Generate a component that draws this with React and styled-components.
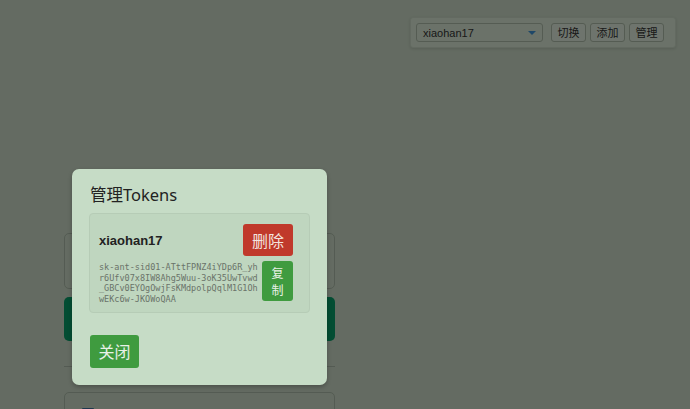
import React from 'react'
import styled, { createGlobalStyle } from 'styled-components'

const GlobalStyle = createGlobalStyle`
  html, body {
    margin: 0;
    padding: 0;
    background: #c8d7c4;
    font-family: "Liberation Sans", "Noto Sans CJK SC", sans-serif;
  }
`

const Page = styled.div`
  position: relative;
  width: 690px;
  height: 409px;
  overflow: hidden;
`

const TopBar = styled.div`
  display: flex;
  justify-content: flex-end;
  padding: 17px 14px 0 0;
`

const AccountPanel = styled.div`
  display: flex;
  align-items: center;
  gap: 4px;
  height: 31px;
  padding: 0 11px 0 5px;
  background: #d6e5d2;
  border: 1px solid #c6d4c2;
  border-radius: 3px;
  box-shadow: 0 1px 3px rgba(0, 0, 0, 0.12);
  box-sizing: border-box;
`

const Select = styled.div`
  display: flex;
  align-items: center;
  justify-content: space-between;
  width: 127px;
  height: 19px;
  padding: 0 6px;
  margin-right: 4px;
  box-sizing: border-box;
  border: 1px solid #aab8a6;
  border-radius: 3px;
  font-size: 11px;
  color: #333;
`

const Caret = styled.span`
  width: 0;
  height: 0;
  border-left: 4px solid transparent;
  border-right: 4px solid transparent;
  border-top: 4px solid #3d8fd0;
`

const SmallButton = styled.button`
  width: 35px;
  height: 19px;
  padding: 0;
  font-family: "Noto Sans CJK SC", sans-serif;
  font-size: 11px;
  line-height: 17px;
  color: #333;
  background: #dde9da;
  border: 1px solid #aab8a6;
  border-radius: 3px;
`

const Column = styled.div`
  display: flex;
  flex-direction: column;
  width: 271px;
  margin: 185px 0 0 64px;
`

const OutlineBox = styled.div`
  height: ${p => p.$h}px;
  border: 1px solid #a9b7a6;
  border-radius: 5px;
  box-sizing: border-box;
  margin-bottom: ${p => p.$mb}px;
  padding: 11px 17px;
`

const BigGreen = styled.div`
  height: 44px;
  background: #069a66;
  border-radius: 5px;
  margin-bottom: 25px;
`

const Rule = styled.div`
  height: 1px;
  background: #a9b7a6;
  margin-bottom: 25px;
`

const Overlay = styled.div`
  position: absolute;
  inset: 0;
  background: rgba(0, 0, 0, 0.5);
`

const Modal = styled.div`
  position: absolute;
  left: 72px;
  top: 169px;
  width: 255px;
  box-sizing: border-box;
  padding: 14px 17px 17px;
  background: #c6dcc6;
  border-radius: 7px;
  box-shadow: 0 2px 4px rgba(0, 0, 0, 0.25);
`

const Title = styled.h2`
  margin: 0 0 6px 1px;
  font-family: "Noto Sans", "Noto Sans CJK SC", sans-serif;
  font-weight: 400;
  font-size: 16.5px;
  line-height: 24px;
  color: #222;
`

const TokenCard = styled.div`
  display: flex;
  flex-direction: column;
  gap: 5px;
  padding: 10px 16px 8px 9px;
  background: #bfd6bf;
  border: 1px solid #b6ccb6;
  border-radius: 4px;
`

const CardRow = styled.div`
  display: flex;
  align-items: ${p => p.$align || 'center'};
  justify-content: space-between;
  gap: 4px;
`

const Name = styled.div`
  font-weight: 700;
  font-size: 13px;
  color: #222;
`

const ActionButton = styled.button`
  font-family: "Noto Sans CJK SC", sans-serif;
  color: ${p => p.$fg || '#e9f1e7'};
  background: ${p => p.$bg};
  border: none;
  border-radius: 3px;
  padding: 0;
  flex-shrink: 0;
  width: ${p => p.$w}px;
  height: ${p => p.$h}px;
  font-size: ${p => p.$fs}px;
  line-height: ${p => p.$lh || p.$h}px;
`

const TokenText = styled.div`
  flex: 1;
  min-width: 0;
  font-family: "DejaVu Sans Mono", monospace;
  font-size: 8.5px;
  line-height: 10.5px;
  color: #6a7369;
  word-break: break-all;
  padding-top: 1px;
`

const Footer = styled.div`
  display: flex;
  margin-top: 22px;
  padding-left: 1px;
`

const TOKEN = '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'

function App() {
  return (
    <Page>
      <GlobalStyle />
      <TopBar>
        <AccountPanel>
          <Select>
            <span>xiaohan17</span>
            <Caret />
          </Select>
          <SmallButton>切换</SmallButton>
          <SmallButton>添加</SmallButton>
          <SmallButton>管理</SmallButton>
        </AccountPanel>
      </TopBar>
      <Column>
        <OutlineBox $h={56} $mb={8} />
        <BigGreen />
        <Rule />
        <OutlineBox $h={60} $mb={0}>
          <svg width="12" height="10" viewBox="0 0 12 10">
            <rect x="0" y="0" width="12" height="10" rx="1" fill="#3c6f9c" />
          </svg>
        </OutlineBox>
      </Column>
      <Overlay />
      <Modal>
        <Title>管理Tokens</Title>
        <TokenCard>
          <CardRow>
            <Name>xiaohan17</Name>
            <ActionButton $bg="#c0392b" $fg="#f3e3de" $w={50} $h={32} $fs={16}>删除</ActionButton>
          </CardRow>
          <CardRow $align="flex-start">
            <TokenText>{TOKEN}</TokenText>
            <ActionButton $bg="#3f9b3f" $w={31} $h={40} $fs={12} $lh={17}>复<br />制</ActionButton>
          </CardRow>
        </TokenCard>
        <Footer>
          <ActionButton $bg="#3f9b3f" $w={49} $h={33} $fs={16}>关闭</ActionButton>
        </Footer>
      </Modal>
    </Page>
  )
}

export default App
